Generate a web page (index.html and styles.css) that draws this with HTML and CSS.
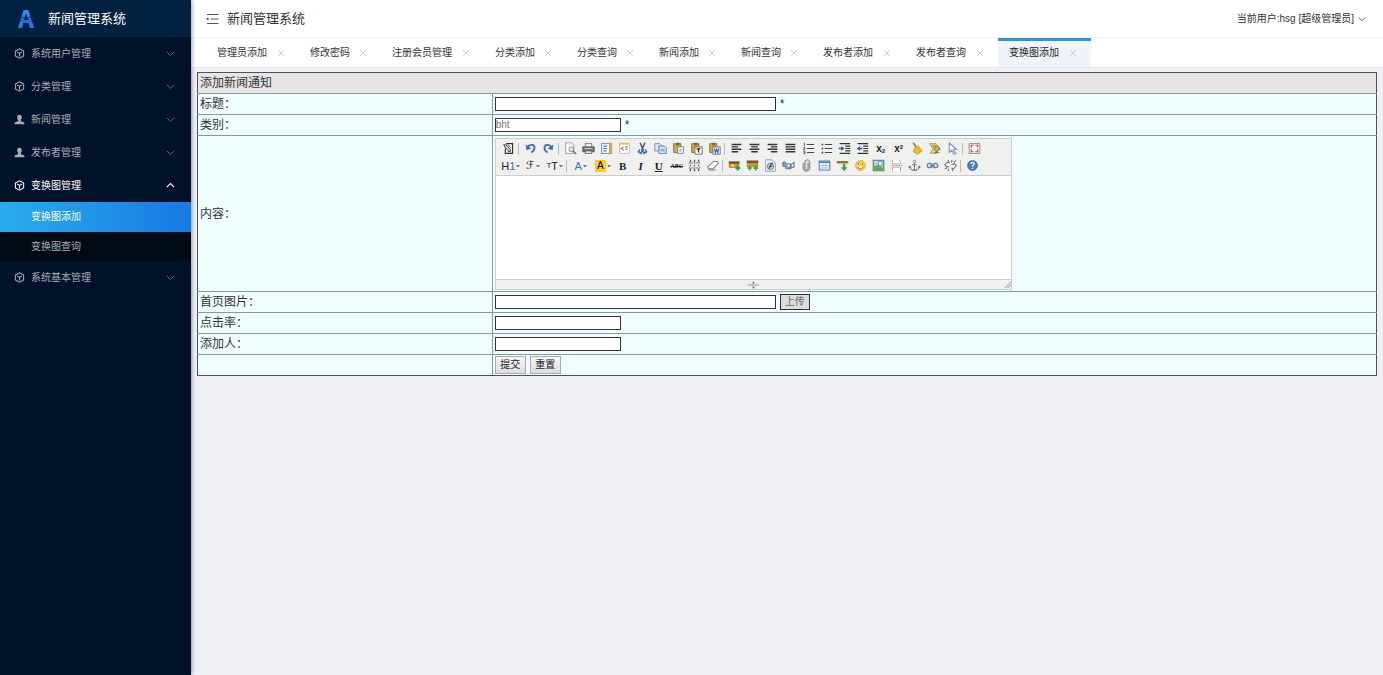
FILE: index.html
```html
<!DOCTYPE html>
<html lang="zh-CN">
<head>
<meta charset="utf-8">
<title>新闻管理系统</title>
<link rel="stylesheet" href="styles.css">
</head>
<body>
<svg class="sprite" aria-hidden="true">
  <symbol id="cube" viewBox="0 0 16 16"><path d="M8 1.200l6 3.300v7L8 14.800l-6-3.300v-7zM4.600 5.800L8 7.800l3.400-2M8 7.800v4.400" fill="none" stroke="currentColor" stroke-width="1.500"/></symbol>
  <symbol id="user" viewBox="0 0 16 16"><path d="M8 1c2.200 0 3.400 1.500 3.400 3.600 0 1.600-.7 2.800-1.400 3.600v2.300c2 .6 4.500 1.200 5 2.200V15H1v-2.300c.5-1 3-1.600 5-2.200V8.200c-.7-.8-1.400-2-1.400-3.600C4.600 2.500 5.800 1 8 1z" fill="currentColor"/></symbol>
  <symbol id="down" viewBox="0 0 16 16"><path d="M1.500 5L8 11.500 14.500 5" fill="none" stroke="currentColor" stroke-width="1.600"/></symbol>
  <symbol id="up" viewBox="0 0 16 16"><path d="M1.500 11L8 4.500 14.500 11" fill="none" stroke="currentColor" stroke-width="2"/></symbol>
  <symbol id="close" viewBox="0 0 16 16"><path d="M2 2l12 12M14 2L2 14" fill="none" stroke="currentColor" stroke-width="1.500"/></symbol>
  <symbol id="caret" viewBox="0 0 5 5"><path d="M0 1.500h5L2.500 4z" fill="#555"/></symbol>
</svg>
<div class="app">
  <aside class="sidebar">
    <div class="brand">
      <svg class="logo" viewBox="0 0 16 20"><path d="M5.500 1h5l1.800 6.500-3 1L8 4.500 6.700 8.500l-3-1z" fill="#3489ee"/><path d="M3.400 8l3.200 1-.6 2h4l-.6-2 3.200-1 1.700 6H1.700z" fill="#2468df"/><path d="M1.500 13.500h4L4.200 19H0zM10.500 13.500h4L16 19h-4.200z" fill="#2878e8"/></svg>
      <span>新闻管理系统</span>
    </div>
    <nav class="menu">
      <a class="item" href="#"><svg><use href="#cube"/></svg><span>系统用户管理</span><svg class="arrow"><use href="#down"/></svg></a>
      <a class="item" href="#"><svg><use href="#cube"/></svg><span>分类管理</span><svg class="arrow"><use href="#down"/></svg></a>
      <a class="item" href="#"><svg><use href="#user"/></svg><span>新闻管理</span><svg class="arrow"><use href="#down"/></svg></a>
      <a class="item" href="#"><svg><use href="#user"/></svg><span>发布者管理</span><svg class="arrow"><use href="#down"/></svg></a>
      <a class="item open" href="#"><svg><use href="#cube"/></svg><span>变换图管理</span><svg class="arrow"><use href="#up"/></svg></a>
      <div class="submenu">
        <a class="subitem current" href="#">变换图添加</a>
        <a class="subitem" href="#">变换图查询</a>
      </div>
      <a class="item" href="#"><svg><use href="#cube"/></svg><span>系统基本管理</span><svg class="arrow"><use href="#down"/></svg></a>
    </nav>
  </aside>
  <div class="main">
    <header class="header">
      <svg class="fold" viewBox="0 0 13 12"><path d="M1 1.500h11.500M4.500 6h8M1 10.500h11.500" stroke="#555" fill="none"/><path d="M0 6l2.500-1.800v3.600z" fill="#555"/></svg>
      <h1>新闻管理系统</h1>
      <a class="account" href="#">当前用户:hsg [超级管理员]<svg><use href="#down"/></svg></a>
    </header>
    <nav class="tabs">
      <div class="tab five"><a href="#">管理员添加</a><button aria-label="关闭"><svg><use href="#close"/></svg></button></div>
      <div class="tab"><a href="#">修改密码</a><button aria-label="关闭"><svg><use href="#close"/></svg></button></div>
      <div class="tab six"><a href="#">注册会员管理</a><button aria-label="关闭"><svg><use href="#close"/></svg></button></div>
      <div class="tab"><a href="#">分类添加</a><button aria-label="关闭"><svg><use href="#close"/></svg></button></div>
      <div class="tab"><a href="#">分类查询</a><button aria-label="关闭"><svg><use href="#close"/></svg></button></div>
      <div class="tab"><a href="#">新闻添加</a><button aria-label="关闭"><svg><use href="#close"/></svg></button></div>
      <div class="tab"><a href="#">新闻查询</a><button aria-label="关闭"><svg><use href="#close"/></svg></button></div>
      <div class="tab five"><a href="#">发布者添加</a><button aria-label="关闭"><svg><use href="#close"/></svg></button></div>
      <div class="tab five"><a href="#">发布者查询</a><button aria-label="关闭"><svg><use href="#close"/></svg></button></div>
      <div class="tab five active"><a href="#">变换图添加</a><button aria-label="关闭"><svg><use href="#close"/></svg></button></div>
    </nav>
    <form class="content">
      <table class="form">
        <tr><th class="caption" colspan="2">添加新闻通知</th></tr>
        <tr><th><label for="title">标题<span class="colon">：</span></label></th><td><div class="field"><input id="title" class="wide" type="text"><span>*</span></div></td></tr>
        <tr><th><label for="kind">类别<span class="colon">：</span></label></th><td><div class="field"><input id="kind" type="text" value="bht"><span>*</span></div></td></tr>
        <tr><th><label for="body">内容<span class="colon">：</span></label></th><td>
          <div class="editor">
            <div class="toolbar">
              <div class="tools">
                <button type="button" aria-label="源代码"><svg viewBox="0 0 16 16"><path d="M5 2h8v12H4V8" fill="#fff" stroke="#333" stroke-width="1.400"/><path d="M2 3l4 1 5 6-2 2-5-5zM7 3l4 4M7 12h4" stroke="#333" fill="#ccc"/></svg></button>
                <i></i>
                <button type="button" aria-label="后退"><svg viewBox="0 0 16 16"><path d="M4 7c3-5 9-4 9 0 0 3-2 5-4 6" fill="none" stroke="#426da9" stroke-width="2.200"/><path d="M2 3l1 7 6-2z" fill="#426da9"/></svg></button>
                <button type="button" aria-label="前进"><svg viewBox="0 0 16 16"><path d="M12 7C9 2 3 3 3 7c0 3 2 5 4 6" fill="none" stroke="#426da9" stroke-width="2.200"/><path d="M14 3l-1 7-6-2z" fill="#426da9"/></svg></button>
                <i></i>
                <button type="button" aria-label="预览"><svg viewBox="0 0 16 16"><path d="M2 1h7l3 3v10H2z" fill="#fff" stroke="#8193a9"/><circle cx="9" cy="9" r="3" fill="#dce8f4" stroke="#777"/><path d="M11 11l4 4" stroke="#777" stroke-width="2"/></svg></button>
                <button type="button" aria-label="打印"><svg viewBox="0 0 16 16"><path d="M4 6V2h8v4" fill="#fff" stroke="#666"/><path d="M1 6h14v6H1z" fill="#777" stroke="#444"/><path d="M3 8h10" stroke="#ddd"/><path d="M4 11h8v3H4z" fill="#eee" stroke="#555"/></svg></button>
                <button type="button" aria-label="模板"><svg viewBox="0 0 16 16"><path d="M2 2h10v12H2z" fill="#fff" stroke="#4472ad"/><path d="M4 5h5M4 8h5M4 11h4" stroke="#4472ad" stroke-width="1.500"/><path d="M11.500 1H15v14h-3.500z" fill="#d9a546"/></svg></button>
                <button type="button" aria-label="代码"><svg viewBox="0 0 16 16"><path d="M2 2h12v12H2z" fill="#fff" stroke="#b3b3ae"/><path d="M7 6L4 8l3 2M9 6h3M9 9h3" stroke="#9c7044" fill="none" stroke-width="1.300"/><path d="M2 2h12" stroke="#e3b95e" stroke-width="2"/></svg></button>
                <button type="button" aria-label="剪切"><svg viewBox="0 0 16 16"><path d="M5 1l4 9M11 1L7 10" stroke="#555" stroke-width="1.800"/><path d="M5 9l-2 3 3 2 2-4 2 4 3-2-2-3" fill="none" stroke="#3368a9" stroke-width="1.800"/></svg></button>
                <button type="button" aria-label="复制"><svg viewBox="0 0 16 16"><path d="M1 2h6l2 2v7H1z" fill="#dceaff" stroke="#5680b9"/><path d="M6 5h7l2 2v7H6z" fill="#dceaff" stroke="#3c6fb2"/><path d="M8 9h5M8 11h5" stroke="#5680b9"/></svg></button>
                <button type="button" aria-label="粘贴"><svg viewBox="0 0 16 16"><path d="M2 2h9v11H2z" fill="#d8a439" stroke="#8a6a2d"/><path d="M5 1h4v3H5z" fill="#666"/><path d="M7 6h7v8H7z" fill="#fff" stroke="#5475a0"/><path d="M9 9h3M9 11h3" stroke="#777"/></svg></button>
                <button type="button" aria-label="粘贴为无格式文本"><svg viewBox="0 0 16 16"><path d="M2 2h9v11H2z" fill="#d8a439" stroke="#8a6a2d"/><path d="M5 1h4v3H5z" fill="#666"/><path d="M6 6h9v9H6z" fill="#fff" stroke="#555"/><path d="M8 8.500h5M10.500 8v5" stroke="#222" stroke-width="1.500"/></svg></button>
                <button type="button" aria-label="从Word粘贴"><svg viewBox="0 0 16 16"><path d="M2 2h9v11H2z" fill="#d8a439" stroke="#8a6a2d"/><path d="M5 1h4v3H5z" fill="#666"/><path d="M6 6h9v9H6z" fill="#eaf1ff" stroke="#4269a6"/><path d="M8 8l1 5 1.500-4 1.500 4 1-5" stroke="#315ca2" fill="none" stroke-width="1.300"/></svg></button>
                <i></i>
                <button type="button" aria-label="左对齐"><svg viewBox="0 0 16 16"><path d="M2 3h12M2 6h8M2 9h12M2 12h8" stroke="#333" stroke-width="1.700"/></svg></button>
                <button type="button" aria-label="居中"><svg viewBox="0 0 16 16"><path d="M2 3h12M4 6h8M2 9h12M4 12h8" stroke="#333" stroke-width="1.700"/></svg></button>
                <button type="button" aria-label="右对齐"><svg viewBox="0 0 16 16"><path d="M2 3h12M6 6h8M2 9h12M6 12h8" stroke="#333" stroke-width="1.700"/></svg></button>
                <button type="button" aria-label="两端对齐"><svg viewBox="0 0 16 16"><path d="M2 3h12M2 6h12M2 9h12M2 12h12" stroke="#333" stroke-width="1.700"/></svg></button>
                <button type="button" aria-label="编号"><svg viewBox="0 0 16 16"><path d="M6 3h9M6 8h9M6 13h9" stroke="#444" stroke-width="1.300"/><path d="M3 1v4M1.500 6.500h2v1.500l-2 1.500h2.500M1.500 11.500h2v3h-2M2 13h1.500" stroke="#444" fill="none"/></svg></button>
                <button type="button" aria-label="项目符号"><svg viewBox="0 0 16 16"><path d="M6 3h9M6 8h9M6 13h9" stroke="#444" stroke-width="1.300"/><path d="M2 2h2v2H2zM2 7h2v2H2zM2 12h2v2H2z" fill="#444"/></svg></button>
                <button type="button" aria-label="增加缩进"><svg viewBox="0 0 16 16"><path d="M2 2h13M9 5h6M9 8h6M9 11h6M2 14h13" stroke="#333" stroke-width="1.400"/><path d="M1 8h4" stroke="#315fa5" stroke-width="2"/><path d="M4 5l4 3-4 3z" fill="#315fa5"/></svg></button>
                <button type="button" aria-label="减少缩进"><svg viewBox="0 0 16 16"><path d="M2 2h13M9 5h6M9 8h6M9 11h6M2 14h13" stroke="#333" stroke-width="1.400"/><path d="M4 8h4" stroke="#315fa5" stroke-width="2"/><path d="M5 5L1 8l4 3z" fill="#315fa5"/></svg></button>
                <button type="button" class="script" aria-label="下标">x<sub>2</sub></button>
                <button type="button" class="script" aria-label="上标">x<sup>2</sup></button>
                <button type="button" aria-label="清理代码"><svg viewBox="0 0 16 16"><path d="M4 1l4 6" stroke="#a87b38" stroke-width="2"/><path d="M6 7l4-2 5 6-6 4-5-3z" fill="#edb82e" stroke="#c89422"/></svg></button>
                <button type="button" aria-label="一键排版"><svg viewBox="0 0 16 16"><path d="M2 2h8l4 6-4 6H3l3-6z" fill="#f4d777" stroke="#a98b48"/><path d="M7 8l5-3 3 4-5 3z" fill="#ddb450" stroke="#666"/><path d="M5 5h5M8 13h6" stroke="#555"/></svg></button>
                <button type="button" aria-label="全选"><svg viewBox="0 0 16 16"><path d="M4 1v12l3-3 3 5 2-1-3-5h4z" fill="#fff" stroke="#7991b0" stroke-width="1.300"/></svg></button>
                <i></i>
                <button type="button" aria-label="全屏显示"><svg viewBox="0 0 16 16"><path d="M1.500 2h13v12h-13z" fill="#fff" stroke="#777"/><path d="M4 7V4h3M9 4h3v3M12 9v3H9M7 12H4V9" fill="none" stroke="#c24c4c" stroke-width="1.500"/></svg></button>
              </div>
              <div class="tools">
                <button type="button" class="drop" aria-label="段落">H<b>1</b><svg><use href="#caret"/></svg></button>
                <button type="button" class="drop face" aria-label="字体">ℱ<svg><use href="#caret"/></svg></button>
                <button type="button" class="drop" aria-label="文字大小"><small>T</small>T<svg><use href="#caret"/></svg></button>
                <i></i>
                <button type="button" class="drop" aria-label="文字颜色"><b>A</b><svg><use href="#caret"/></svg></button>
                <button type="button" class="drop" aria-label="文字背景"><mark>A</mark><svg><use href="#caret"/></svg></button>
                <button type="button" class="letter" aria-label="粗体">B</button>
                <button type="button" class="letter italic" aria-label="斜体">I</button>
                <button type="button" class="letter underline" aria-label="下划线">U</button>
                <button type="button" class="strike" aria-label="删除线">ABC</button>
                <button type="button" aria-label="行距"><svg viewBox="0 0 16 16"><path d="M1 5h14M1 11h14" stroke="#555" stroke-width="1.300" stroke-dasharray="2 1"/><path d="M3 1v3M8 1v3M13 1v3M3 12v3M8 12v3M13 12v3M3 7v2M8 7v2M13 7v2" stroke="#555" stroke-width="1.600"/></svg></button>
                <button type="button" aria-label="删除格式"><svg viewBox="0 0 16 16"><path d="M9 3h5l1 2-6 7H3l-1-2zM3 13.500h9" fill="#fff" stroke="#7c8490" stroke-width="1.300"/></svg></button>
                <i></i>
                <button type="button" aria-label="图片"><svg viewBox="0 0 16 16"><path d="M1 3h13v8H1z" fill="#c8942e"/><path d="M1 3h13v3H1z" fill="#6f5637"/><path d="M3 7l3-1 2 2-2 2z" fill="#f6d36a"/><path d="M9 11h6M12 8v6" stroke="#2c9b3d" stroke-width="2.500"/></svg></button>
                <button type="button" aria-label="批量图片上传"><svg viewBox="0 0 16 16"><path d="M1 2h14v8H1z" fill="#c8942e"/><path d="M1 2h14v3H1z" fill="#6f5637"/><path d="M2 11h5M4.500 9v5M9 11h6M12 8v6" stroke="#2c9b3d" stroke-width="2"/></svg></button>
                <button type="button" aria-label="Flash"><svg viewBox="0 0 16 16"><path d="M2 1h8l4 4v10H2z" fill="#eef2f5" stroke="#8793a2"/><circle cx="8" cy="9" r="4" fill="#c4d0dc" stroke="#5f7287"/><path d="M11 5C8 5 8 8 6 12M7 9h3" stroke="#455569" stroke-width="1.500" fill="none"/></svg></button>
                <button type="button" aria-label="视音频"><svg viewBox="0 0 16 16"><path d="M1 4h3l1 2h6v6H5L4 9H1z" fill="#8aa0b7" stroke="#4b6582"/><path d="M11 7l4-3v6l-4 1z" fill="#ced9e5" stroke="#4b6582"/><circle cx="8" cy="8" r="1.500" fill="#fff"/></svg></button>
                <button type="button" aria-label="插入文件"><svg viewBox="0 0 16 16"><path d="M10 5v7c0 2-4 2-4 0V4c0-4 6-4 6 0v8c0 4-8 4-8 0V5" fill="#ddd" stroke="#777" stroke-width="1.200"/></svg></button>
                <button type="button" aria-label="表格"><svg viewBox="0 0 16 16"><path d="M1.500 2.500h13v11h-13z" fill="#fff" stroke="#4c78b5" stroke-width="1.300"/><path d="M2 4h12" stroke="#4c78b5" stroke-width="2"/><path d="M2 8h12M2 11h12M6 4v9M10 4v9" stroke="#9cb6db"/></svg></button>
                <button type="button" aria-label="插入横线"><svg viewBox="0 0 16 16"><path d="M1 4h14" stroke="#9a6f40" stroke-width="3"/><path d="M10 6v5" stroke="#439d43" stroke-width="3"/><path d="M6 10h8l-4 5z" fill="#439d43"/></svg></button>
                <button type="button" aria-label="插入表情"><svg viewBox="0 0 16 16"><circle cx="8" cy="8" r="6" fill="#ffcf43" stroke="#db9c25"/><path d="M5 6h1M10 6h1" stroke="#714b15" stroke-width="1.500"/><path d="M4.500 9c1.500 4 5.500 4 7 0" fill="#fff" stroke="#a57119"/></svg></button>
                <button type="button" aria-label="百度地图"><svg viewBox="0 0 16 16"><path d="M1.500 1.500h13v13h-13z" fill="#add5ef" stroke="#547e59" stroke-width="1.300"/><path d="M2 14V9l5-2 7 4v3z" fill="#68a955"/><path d="M8 3h4v5H8z" fill="#fff" stroke="#6292ba"/></svg></button>
                <button type="button" aria-label="插入分页符"><svg viewBox="0 0 16 16"><path d="M3 1v5h10V3l-2-2M3 15v-5h10v5" fill="#fff" stroke="#aaa" stroke-width="1.200"/><path d="M1 8h14" stroke="#999" stroke-dasharray="2 1"/></svg></button>
                <button type="button" aria-label="锚点"><svg viewBox="0 0 16 16"><circle cx="8" cy="3" r="1.500" fill="none" stroke="#777"/><path d="M8 4.500V14M5 7h6M2 9c0 3 3 5 6 5s6-2 6-5M1 11l1-2 2 1M15 11l-1-2-2 1" stroke="#777" stroke-width="1.300" fill="none"/></svg></button>
                <button type="button" aria-label="超级链接"><svg viewBox="0 0 16 16"><rect x="1.500" y="5.500" width="6" height="5" rx="2.500" fill="#dce4ed" stroke="#667e9b" stroke-width="1.500"/><rect x="8.500" y="5.500" width="6" height="5" rx="2.500" fill="#dce4ed" stroke="#667e9b" stroke-width="1.500"/><path d="M5 8h6" stroke="#667e9b" stroke-width="1.500"/></svg></button>
                <button type="button" aria-label="取消超级链接"><svg viewBox="0 0 16 16"><path d="M7 5L4 4 1 7l2 3 3-1M9 11l3 1 3-4-2-2-4 1M5 1l1 3M10 1L9 4M6 12l-1 3M10 12l1 3M1 12l3-1M12 4l3-2" fill="none" stroke="#68717c" stroke-width="1.300"/></svg></button>
                <i></i>
                <button type="button" aria-label="关于"><svg viewBox="0 0 16 16"><circle cx="8" cy="8" r="6" fill="#477fc5" stroke="#295d9e"/><path d="M6 6c0-3 5-2 4 .5C9.500 7.500 8 7.500 8 9.500M8 10.800v1.400" stroke="#fff" stroke-width="1.500" fill="none"/></svg></button>
              </div>
            </div>
            <textarea id="body"></textarea>
            <div class="status"><svg class="grip" viewBox="0 0 11 8"><path d="M0 4h11" stroke="#999"/><path d="M4 2.500L5.500 0 7 2.500zM4 5.500L5.500 8 7 5.500z" fill="#777"/></svg><svg class="corner" viewBox="0 0 8 8"><path d="M1 8l7-7M4 8l4-4" stroke="#888"/></svg></div>
          </div>
        </td></tr>
        <tr><th><label for="picture">首页图片<span class="colon">：</span></label></th><td><div class="field"><input id="picture" class="wide" type="text"><button type="button" class="upload">上传</button></div></td></tr>
        <tr><th><label for="hits">点击率<span class="colon">：</span></label></th><td><div class="field"><input id="hits" type="text"></div></td></tr>
        <tr><th><label for="author">添加人<span class="colon">：</span></label></th><td><div class="field"><input id="author" type="text"></div></td></tr>
        <tr><th></th><td><div class="field"><button type="submit" class="action">提交</button><button type="reset" class="action">重置</button></div></td></tr>
      </table>
    </form>
  </div>
</div>
</body>
</html>
```
FILE: styles.css
```css
* { box-sizing: border-box; }
body {
  margin: 0;
  background: #eff1f5;
  color: #333;
  font: 12px/16px "Liberation Sans", "Noto Sans CJK SC", sans-serif;
}
a { color: inherit; text-decoration: none; }
button, input, textarea { font: inherit; color: inherit; margin: 0; padding: 0; }
.sprite { position: absolute; width: 0; height: 0; }
.app { display: flex; min-height: 100vh; }

.sidebar {
  flex: none;
  width: 191px;
  background: #001229;
  box-shadow: 1px 0 4px rgba(0, 21, 41, .4);
  z-index: 1;
}
.brand {
  display: flex;
  align-items: center;
  gap: 14px;
  height: 37px;
  padding-left: 18px;
  background: #00213f;
  color: #fff;
  font-size: 13px;
}
.logo { width: 16px; height: 20px; }
.menu { font-size: 10px; color: #a5adb7; }
.item {
  display: flex;
  align-items: center;
  gap: 6px;
  height: 33px;
  padding: 0 16px 0 14px;
}
.item svg { width: 11px; height: 11px; }
.item .arrow { width: 9px; height: 9px; margin-left: auto; color: #6a7380; }
.item.open, .item.open .arrow { color: #fff; }
.submenu { background: #000a16; }
.subitem {
  display: flex;
  align-items: center;
  height: 29px;
  padding-left: 31px;
}
.subitem.current {
  height: 30px;
  color: #fff;
  background: linear-gradient(to right, #29adeb, #187ae3);
}

.main { flex: 1; min-width: 0; }
.header {
  display: flex;
  align-items: center;
  gap: 8px;
  height: 37px;
  padding: 0 17px 0 15px;
  background: #fff;
}
.fold { width: 13px; height: 12px; }
h1 { margin: 0; font-size: 13px; font-weight: 400; }
.account {
  display: flex;
  align-items: center;
  gap: 4px;
  margin-left: auto;
  font-size: 10px;
}
.account svg { width: 8px; height: 8px; }

.tabs {
  display: flex;
  height: 31px;
  padding-left: 15px;
  background: #fff;
  border-top: 1px solid #f4f4f4;
  border-bottom: 1px solid #e4e6ea;
  font-size: 10px;
}
.tab {
  display: flex;
  align-items: center;
  justify-content: space-between;
  width: 82px;
  padding: 0 14px 0 11px;
}
.tab.five { width: 93px; }
.tab.six { width: 103px; }
.tab button { display: flex; border: 0; background: none; color: #bbb; }
.tab svg { width: 8px; height: 8px; }
.tab.active {
  background: #eff3fa;
  color: #222;
  border-top: 3px solid #3292d0;
  padding-bottom: 3px;
}

.content { padding: 4px 6px; }
.form {
  width: 100%;
  border-collapse: collapse;
  background: #f0fdff;
}
.form th, .form td {
  height: 21px;
  padding: 1px 2px;
  border: 1px solid #89969b;
  text-align: left;
  font-weight: 400;
}
.form th { width: 25%; border-left-color: #4c5257; }
.form td, .form .caption { border-right-color: #4c5257; }
.form .caption { background: #e7e5e6; border-top-color: #4c5257; }
.form tr:last-child > * { border-bottom-color: #4c5257; }
.colon { font-family: "Noto Sans CJK TC", sans-serif; line-height: 1; }
.field { display: flex; align-items: center; gap: 4px; }
.field input {
  width: 126px;
  height: 14px;
  border: 1px solid #333;
  background: #fff;
  color: #777;
  font-size: 10px;
}
.field .wide { width: 281px; }
.upload {
  height: 16px;
  padding: 0 4px;
  border: 1px solid #333;
  background: #dcdcdc;
  color: #666;
  font-size: 10px;
  line-height: 12px;
}
.action {
  width: 31px;
  height: 18px;
  border: 1px solid #aaa;
  background: linear-gradient(#f6f6f6, #ddd);
  color: #222;
  font-size: 10px;
}

.editor {
  width: 517px;
  max-width: 100%;
  margin-top: 1px;
  border: 1px solid #ccc;
  background: #fff;
}
.toolbar { padding: 1px 4px; background: #f0f0ee; border-bottom: 1px solid #ccc; }
.tools { display: flex; align-items: center; height: 17px; }
.tools i { flex: none; width: 4px; height: 12px; border-left: 1px solid #bbb; }
.tools button {
  display: flex;
  align-items: center;
  justify-content: center;
  flex: none;
  width: 18px;
  height: 17px;
  border: 0;
  background: none;
  color: #222;
}
.tools svg { width: 13px; height: 13px; }
.tools .drop { width: 22px; font-size: 11px; }
.tools .drop svg { width: 4px; height: 4px; margin-left: 1px; }
.drop b { color: #3f70b0; font-weight: 400; }
.drop mark { padding: 0 2px; background: #ffc928; font-size: 10px; line-height: 12px; }
.drop small { font-size: 8px; }
.tools .face { font-family: "DejaVu Serif", "DejaVu Sans", serif; }
.tools .letter { font: bold 11px/14px "Liberation Serif", serif; }
.tools .italic { font-style: italic; }
.tools .underline { text-decoration: underline; }
.tools .strike { font: bold 6px/14px "Liberation Serif", serif; text-decoration: line-through; }
.tools .script { font: bold 10px/10px "Liberation Sans", sans-serif; }
.script sub, .script sup { font-size: 6px; line-height: 6px; vertical-align: baseline; }
.script sub { padding-top: 5px; }
.script sup { padding-bottom: 3px; }
.editor textarea {
  display: block;
  width: 100%;
  height: 103px;
  border: 0;
  outline: 0;
  resize: none;
}
.status {
  display: grid;
  grid-template-columns: 1fr auto 1fr;
  align-items: center;
  height: 10px;
  border-top: 1px solid #ccc;
  background: #f0f0ee;
}
.grip { grid-column: 2; width: 11px; height: 8px; }
.corner { justify-self: end; width: 7px; height: 7px; }
```
